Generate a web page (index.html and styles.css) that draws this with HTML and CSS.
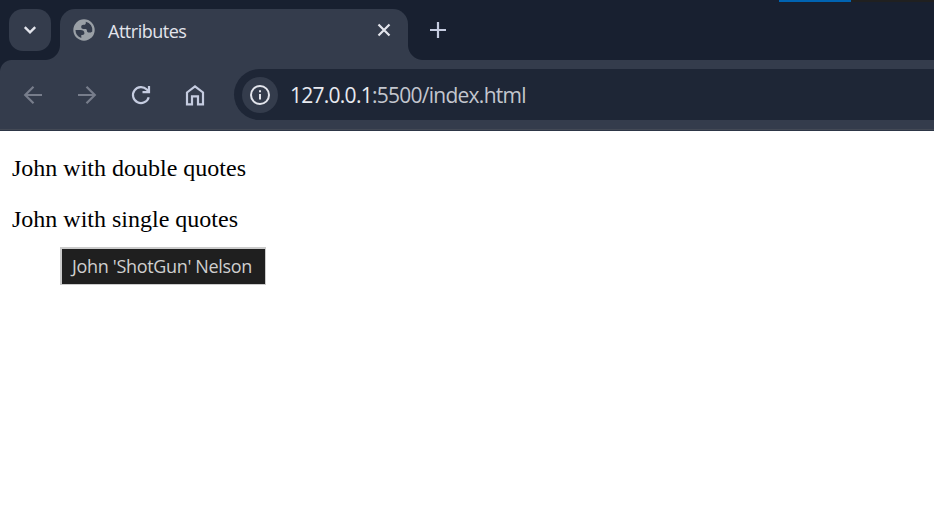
FILE: index.html
```html
<!DOCTYPE html>
<html lang="en">
<head>
<meta charset="utf-8">
<title>Attributes</title>
<link rel="stylesheet" href="styles.css">
</head>
<body>
<div class="browser">
  <header class="tabstrip">
    <div class="edge-strip"><span class="edge-blue"></span><span class="edge-dark"></span></div>
    <button class="tab-search" aria-label="Search tabs">
      <svg width="42" height="42" viewBox="0 0 42 42"><path d="M15.8 18.2 21 23.4 26.2 18.2" fill="none" stroke="#e3e5ec" stroke-width="2.4"/></svg>
    </button>
    <div class="tab">
      <svg class="globe" width="22" height="22" viewBox="0 0 22 22">
        <circle cx="11" cy="11" r="10.7" fill="#9aa0a6"/>
        <path d="M2.500 11h5.100c2.300 0 3.800 1.200 3.800 3.200 0 1.100-.8 1.700-2 1.700H8.300v3A8.500 8.500 0 0 1 2.500 11zM12.800 2.700A8.500 8.500 0 0 1 19.300 12.500c-1 1-1.900 1.100-3.100 1.100-1.500 0-2.300-.9-2.300-2.200 0-1-.6-1.500-1.600-1.500h-1.900c-1.300 0-2.200-.8-2.200-2s.9-2.100 2.200-2.100h.7c1 0 1.700-.8 1.700-1.900z" fill="#343c4c"/>
      </svg>
      <span class="tab-title">Attributes</span>
      <svg class="close" width="14" height="14" viewBox="0 0 14 14"><path d="M1.500 1.500 12.500 12.500M12.500 1.500 1.500 12.500" stroke="#e3e5ec" stroke-width="2.200"/></svg>
    </div>
    <svg class="new-tab" width="16" height="16" viewBox="0 0 16 16"><path d="M8 0V16M0 8H16" stroke="#c5cce0" stroke-width="2.200"/></svg>
  </header>
  <nav class="toolbar">
    <svg class="nav off" width="24" height="24" viewBox="0 0 24 24"><path d="M21 12H4.500M12.500 3.700 4.200 12l8.300 8.300"/></svg>
    <svg class="nav off" width="24" height="24" viewBox="0 0 24 24"><path d="M3 12h16.500M11.500 3.700 19.800 12l-8.300 8.300"/></svg>
    <svg class="nav" width="24" height="24" viewBox="0 0 24 24"><path d="M19.700 14.200A8 8 0 1 1 17.800 6.600L20 9M20 3V9.200H13.500"/></svg>
    <svg class="nav" width="24" height="24" viewBox="0 0 24 24"><path d="M4 9.500 12 3.300 20 9.500V21.400H15V13.400H9V21.400H4Z"/></svg>
    <div class="omnibox">
      <span class="info"><svg width="22" height="22" viewBox="0 0 22 22"><circle cx="11" cy="11" r="9" fill="none" stroke="#e3e5ec" stroke-width="2"/><path d="M11 10V15.500M11 6.300V8.300" stroke="#e3e5ec" stroke-width="2"/></svg></span>
      <span class="url"><span class="host">127.0.0.1</span>:5500/index.html</span>
    </div>
  </nav>
  <main class="page">
    <p>John with double quotes</p>
    <p class="hovered">John with single quotes<span class="tooltip">John 'ShotGun' Nelson</span></p>
  </main>
</div>
</body>
</html>
```
FILE: styles.css
```css
* { box-sizing: border-box; }
body { margin: 0; background: #fff; }
.browser { height: 525px; overflow: hidden; display: flex; flex-direction: column; background: #fff; }
.tabstrip {
  position: relative;
  height: 60px;
  padding: 9px 0 0 9px;
  display: flex;
  align-items: flex-start;
  background: #182030;
}
.edge-strip { position: absolute; top: 0; right: 0; width: 155px; height: 2px; display: flex; }
.edge-blue { width: 72px; background: #0063b1; }
.edge-dark { flex: 1; background: #202020; }
.tab-search { width: 42px; height: 42px; padding: 0; border: 0; border-radius: 14px; background: #343c4c; }
.tab-search svg { display: block; }
.tab {
  position: relative;
  width: 348px;
  height: 51px;
  margin-left: 9px;
  padding: 0 17px 9px 13px;
  display: flex;
  align-items: center;
  border-radius: 15px 15px 0 0;
  background: #343c4c;
}
.tab::before, .tab::after { content: ""; position: absolute; bottom: 0; width: 15px; height: 15px; }
.tab::before { left: -15px; background: radial-gradient(circle at 0 0, transparent 14.5px, #343c4c 15.5px); }
.tab::after { right: -15px; background: radial-gradient(circle at 100% 0, transparent 14.5px, #343c4c 15.5px); }
.tab-title { margin-left: 13px; padding-top: 2px; font: 18px/24px "Open Sans", sans-serif; letter-spacing: -0.48px; color: #e3e5ec; }
.close { margin-left: auto; }
.new-tab { margin: 13px 0 0 22px; }
.toolbar {
  position: relative;
  height: 71px;
  padding: 0 0 2px 21px;
  display: flex;
  align-items: center;
  background: linear-gradient(#343c4c 69px, #434955 69px, #434955 70px, #2d3646 70px);
}
.toolbar::before {
  content: "";
  position: absolute;
  left: 0; top: 0;
  width: 12px; height: 12px;
  background: radial-gradient(circle at 100% 100%, transparent 11.5px, #182030 12.5px);
}
.nav { flex: none; margin-right: 30px; fill: none; stroke: #c5cce0; stroke-width: 2.2; }
.off { stroke: #777d8b; }
.omnibox {
  flex: 1;
  height: 51px;
  margin-left: -3px;
  padding-left: 8px;
  display: flex;
  align-items: center;
  border-radius: 26px 0 0 26px;
  background: #1e2636;
}
.info { width: 36px; height: 36px; display: grid; place-items: center; border-radius: 50%; background: #343c4c; }
.url { margin-left: 12px; font: 21px/30px "Open Sans", sans-serif; letter-spacing: -0.74px; color: #c3c6ce; white-space: nowrap; }
.host { color: #e8eaf0; }
.page { padding: 24px 12px; font: 24px/27px "Liberation Serif", serif; color: #000; }
.page p { margin: 0 0 24px; }
.hovered { position: relative; }
.tooltip {
  position: absolute;
  left: 48px; top: 41px;
  width: 206px; height: 38px;
  padding-left: 10px;
  border: solid #cbcbcb;
  border-width: 2px 1px 1px 2px;
  background: #1f1f1f;
  color: #cfcfcf;
  font: 18px/35px "Open Sans", sans-serif;
  letter-spacing: -0.33px;
  white-space: nowrap;
}
```
